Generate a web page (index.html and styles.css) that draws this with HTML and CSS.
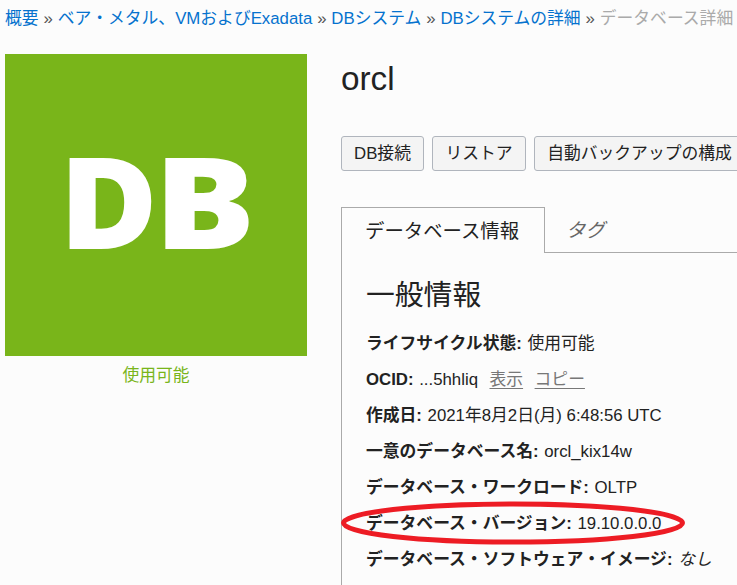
FILE: index.html
```html
<!DOCTYPE html>
<html lang="ja">
<head>
<meta charset="utf-8">
<title>データベース詳細</title>
<link rel="stylesheet" href="styles.css">
</head>
<body>
<nav class="crumbs">
  <a>概要</a><span class="sep">»</span><a>ベア・メタル、VMおよびExadata</a><span class="sep">»</span><a>DBシステム</a><span class="sep">»</span><a>DBシステムの詳細</a><span class="sep">»</span><span class="current">データベース詳細</span>
</nav>
<div class="layout">
  <aside class="side">
    <div class="tile"><span class="mark-d">D</span><span class="mark-b">B</span></div>
    <div class="status">使用可能</div>
  </aside>
  <main class="main">
    <h1>orcl</h1>
    <div class="actions">
      <button class="b1">DB接続</button>
      <button class="b2">リストア</button>
      <button class="b3">自動バックアップの構成</button>
    </div>
    <div class="tabs">
      <div class="tab active">データベース情報</div>
      <div class="tab idle">タグ</div>
    </div>
    <section class="panel">
      <h2>一般情報</h2>
      <p><b>ライフサイクル状態:</b> 使用可能</p>
      <p class="ocid"><b>OCID:</b> ...5hhliq<a class="action">表示</a><a class="action">コピー</a></p>
      <p><b>作成日:</b> 2021年8月2日(月) 6:48:56 UTC</p>
      <p><b>一意のデータベース名:</b> orcl_kix14w</p>
      <p><b>データベース・ワークロード:</b> OLTP</p>
      <p class="marked"><b>データベース・バージョン:</b> 19.10.0.0.0
        <svg class="ring" width="344" height="44" viewBox="0 0 344 44"><ellipse cx="172" cy="22" rx="169.5" ry="19" fill="none" stroke="#ed1c24" stroke-width="5"/></svg>
      </p>
      <p><b>データベース・ソフトウェア・イメージ:</b> <i>なし</i></p>
    </section>
  </main>
</div>
</body>
</html>
```
FILE: styles.css
```css
* { box-sizing: border-box; }
body {
  margin: 0;
  height: 585px;
  overflow: hidden;
  background: #fcfcfc;
  color: #222;
  font: 16.8px/24px "Liberation Sans", "Noto Sans CJK JP", sans-serif;
  white-space: nowrap;
}
.crumbs {
  display: flex;
  height: 54px;
  padding: 7px 0 0 5px;
}
.crumbs a { color: #0572ce; }
.sep { width: 19.1px; text-align: center; color: #555; }
.current { color: #aaa; }
.layout { display: flex; }
.side { width: 341px; flex: none; padding-left: 5px; }
.tile {
  width: 302px;
  height: 302px;
  background: #79b51a;
  color: #fff;
  font: 800 127px/292px "Open Sans", sans-serif;
  text-align: center;
}
.mark-d, .mark-b { display: inline-block; }
.mark-d { transform: translateX(-5px) scaleX(1.06); }
.mark-b { transform: translateX(2px) scaleX(1.19); }
.status {
  width: 302px;
  padding-top: 8px;
  text-align: center;
  color: #79b51a;
}
.main { flex: none; width: 396px; }
h1 {
  margin: 0;
  height: 82px;
  font-size: 33.3px;
  font-weight: 400;
  line-height: 50px;
}
.actions { display: flex; gap: 8px; height: 71px; }
.actions button {
  flex: none;
  height: 35px;
  padding: 0;
  border: 1px solid #b0b5bd;
  border-radius: 3px;
  background: #f4f4f4;
  color: #222;
  font: inherit;
  line-height: 31px;
}
.b1 { width: 83px; }
.b2 { width: 94px; }
.b3 { width: 211px; }
.tabs { display: flex; height: 46px; font-size: 19.4px; }
.tab { line-height: 46px; padding-left: 23px; }
.active {
  width: 204px;
  border: 1px solid #aaa;
  border-bottom: 0;
}
.idle {
  flex: 1;
  padding-left: 21px;
  border-bottom: 1px solid #aaa;
  color: #666;
  font-style: italic;
}
.panel {
  height: 340px;
  padding: 20px 0 0 24px;
  border-left: 1px solid #aaa;
}
h2 {
  margin: 0 0 15px;
  font-size: 28.8px;
  font-weight: 400;
  line-height: 44px;
}
p { margin: 0 0 12px; height: 24px; }
b { margin-right: 1px; }
.action {
  margin-left: 11.5px;
  color: #777;
  text-decoration: underline;
  text-underline-offset: 3px;
}
.marked { position: relative; }
.ring { position: absolute; left: -25px; top: -11px; }
```
